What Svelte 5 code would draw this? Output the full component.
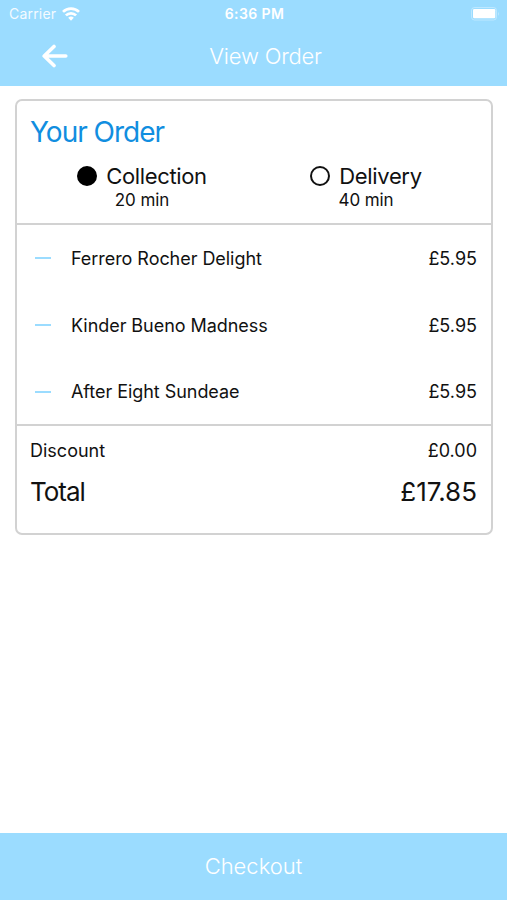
<script>
  let method = $state('collection');

  const methods = [
    { id: 'collection', name: 'Collection', time: '20 min' },
    { id: 'delivery', name: 'Delivery', time: '40 min' }
  ];

  const items = [
    { name: 'Ferrero Rocher Delight', price: 5.95 },
    { name: 'Kinder Bueno Madness', price: 5.95 },
    { name: 'After Eight Sundeae', price: 5.95 }
  ];

  const discount = 0;
  const total = items.reduce((sum, item) => sum + item.price, 0) - discount;

  const money = (value) => `£${value.toFixed(2)}`;
</script>

<div class="screen">
  <header class="header">
    <div class="status-bar">
      <div class="carrier">
        <span class="carrier-name">Carrier</span>
        <svg class="wifi" width="18" height="14" viewBox="0 0 18 14" fill="none" stroke="#fff" stroke-width="2.7">
          <path d="M1 4.9a11.4 11.4 0 0 1 16 0" />
          <path d="M3.9 8.4a7.2 7.2 0 0 1 10.2 0" />
          <path d="M9 13.7L6.2 10.8a4 4 0 0 1 5.6 0z" fill="#fff" stroke="none" />
        </svg>
      </div>
      <span class="time">6:36 PM</span>
      <div class="battery">
        <svg width="29" height="14" viewBox="0 0 29 14">
          <rect x="0.5" y="0.5" width="25" height="12.5" rx="3" fill="none" stroke="#fff" stroke-opacity="0.35" />
          <rect x="2" y="2" width="22.3" height="9.3" rx="1.2" fill="#fff" />
          <path d="M27 4.5q1.6 2 0 4.5z" fill="#fff" fill-opacity="0.4" />
        </svg>
      </div>
    </div>
    <div class="nav-bar">
      <button class="back" aria-label="Back">
        <svg width="26" height="24" viewBox="0 0 26 24" fill="none" stroke="#fff" stroke-width="3.6" stroke-linecap="round" stroke-linejoin="round">
          <path d="M12 2.5L2.2 12l9.8 9.5M2.6 12h21.2" />
        </svg>
      </button>
      <h1 class="nav-title">View Order</h1>
    </div>
  </header>

  <main class="content">
    <section class="card">
      <div class="order-head">
        <h2 class="title">Your Order</h2>
        <div class="methods">
          {#each methods as option}
            <button class="method" onclick={() => (method = option.id)}>
              <span class="method-row">
                <span class="radio" class:selected={method === option.id}></span>
                <span class="method-name">{option.name}</span>
              </span>
              <span class="method-time">{option.time}</span>
            </button>
          {/each}
        </div>
      </div>

      <ul class="items">
        {#each items as item}
          <li class="item">
            <button class="remove" aria-label="Remove {item.name}"></button>
            <span class="item-name">{item.name}</span>
            <span class="price">{money(item.price)}</span>
          </li>
        {/each}
      </ul>

      <div class="summary">
        <div class="discount">
          <span class="discount-label">Discount</span>
          <span class="price">{money(discount)}</span>
        </div>
        <div class="total">
          <span class="total-label">Total</span>
          <span class="total-price">{money(total)}</span>
        </div>
      </div>
    </section>
  </main>

  <button class="checkout"><span class="checkout-label">Checkout</span></button>
</div>

<style>
  :global(body) {
    margin: 0;
    background: #fff;
  }

  .screen {
    display: flex;
    flex-direction: column;
    height: 100vh;
    font-family: Inter, 'Liberation Sans', sans-serif;
    color: #111;
    background: #fff;
  }

  button {
    padding: 0;
    border: none;
    background: none;
    font: inherit;
    color: inherit;
    cursor: pointer;
  }

  .header {
    height: 86px;
    background: #9bdcff;
    color: #fff;
  }

  .status-bar {
    display: grid;
    grid-template-columns: 1fr auto 1fr;
    align-items: center;
    height: 27px;
    padding: 0 7px 0 9px;
    font-size: 14px;
    line-height: 27px;
  }

  .carrier {
    display: flex;
    align-items: center;
    gap: 6px;
  }

  .carrier-name {
    letter-spacing: 0.2px;
    opacity: 0.9;
  }

  .time {
    font-weight: 600;
    letter-spacing: 0.4px;
  }

  .battery {
    display: flex;
    justify-content: flex-end;
  }

  .nav-bar {
    display: grid;
    grid-template-columns: 26px 1fr 26px;
    align-items: center;
    height: 58px;
    padding: 0 18px 0 42px;
  }

  .back {
    display: flex;
    width: 26px;
  }

  .nav-title {
    margin: 0;
    font-size: 22px;
    font-weight: 300;
    line-height: 56px;
    letter-spacing: -0.2px;
    text-align: center;
  }

  .content {
    flex: 1;
    padding: 13px 14px 0 15px;
  }

  .card {
    border: 2px solid #d2d2d2;
    border-radius: 7px;
  }

  .order-head {
    height: 122px;
    border-bottom: 2px solid #d2d2d2;
  }

  .title {
    margin: 0;
    padding: 12px 13px 0;
    font-size: 28px;
    font-weight: 400;
    line-height: 38px;
    letter-spacing: -1px;
    color: #118ee0;
  }

  .methods {
    display: grid;
    grid-template-columns: 1fr 1fr;
    padding: 12px 13px 0;
  }

  .method {
    display: flex;
    flex-direction: column;
    align-items: center;
  }

  .method-row {
    display: flex;
    align-items: center;
    gap: 9px;
    font-size: 22px;
    line-height: 26px;
    letter-spacing: -0.35px;
  }

  .radio {
    box-sizing: border-box;
    width: 20px;
    height: 20px;
    border: 2px solid #111;
    border-radius: 50%;
  }

  .radio.selected {
    background: #000;
    border-color: #000;
  }

  .method-time {
    font-size: 17px;
    line-height: 22px;
    letter-spacing: -0.1px;
  }

  .items {
    height: 199px;
    margin: 0;
    padding: 0;
    border-bottom: 2px solid #d2d2d2;
    list-style: none;
  }

  .item {
    display: flex;
    align-items: center;
    height: 66.7px;
    padding: 0 14px 0 18px;
    font-size: 18px;
  }

  .remove {
    width: 16px;
    height: 2px;
    margin-right: 20px;
    background: #9bdcff;
  }

  .item-name {
    flex: 1;
    letter-spacing: -0.05px;
  }

  .summary {
    height: 107px;
    padding: 0 14px 0 13px;
  }

  .discount,
  .total {
    display: flex;
    justify-content: space-between;
  }

  .discount {
    padding-top: 11px;
    font-size: 18px;
    line-height: 28px;
  }

  .total {
    font-size: 26px;
    line-height: 54px;
  }

  .total-label {
    letter-spacing: -1px;
  }

  .checkout {
    height: 67px;
    background: #9bdcff;
    color: #fff;
    font-size: 22px;
    font-weight: 300;
  }

  .checkout-label {
    position: relative;
    top: -1px;
  }
</style>
